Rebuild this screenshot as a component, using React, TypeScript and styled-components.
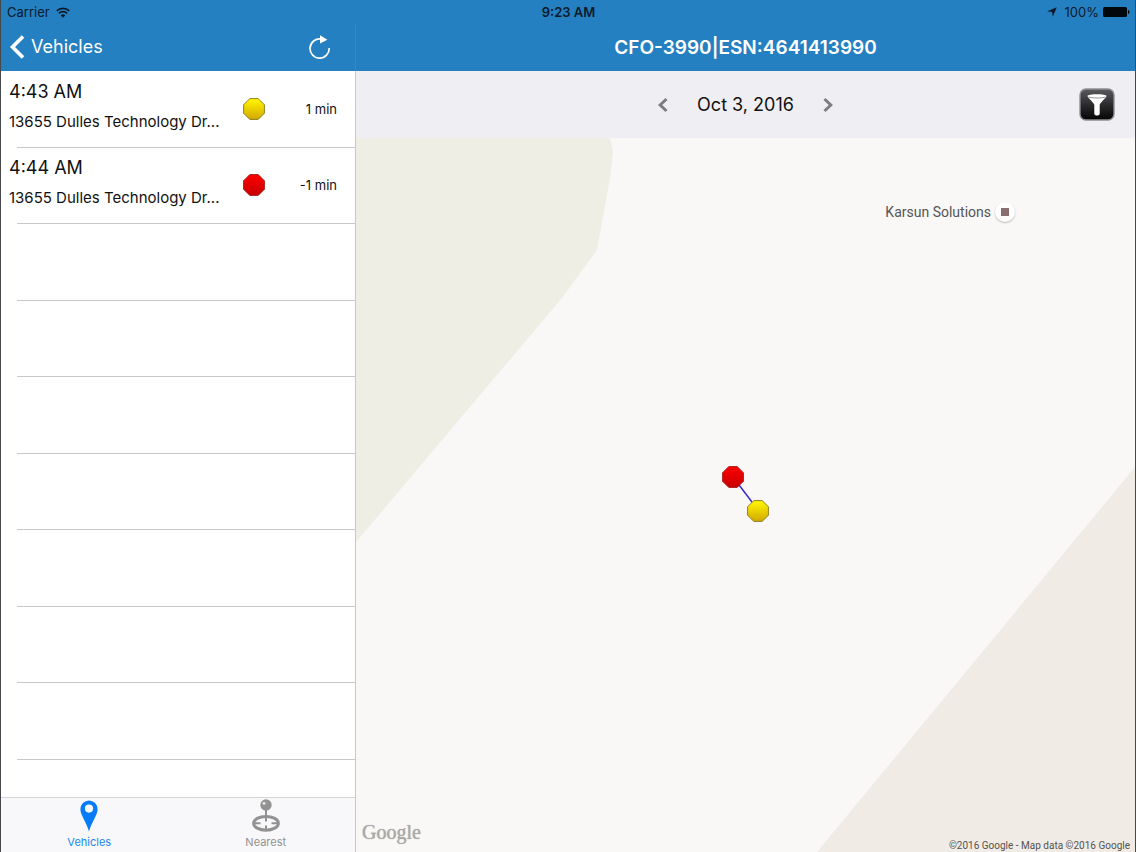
import React from 'react';
import styled, { createGlobalStyle } from 'styled-components';

const GlobalStyle = createGlobalStyle`
  * { box-sizing: border-box; }
  html, body, #root { height: 100%; margin: 0; }
  body { font-family: Inter, "Liberation Sans", sans-serif; color: #111; background: #fff; }
  button { font: inherit; color: inherit; background: none; border: 0; padding: 0; cursor: pointer; }
  svg { display: block; flex: none; }
  h1, h2, p { margin: 0; font-weight: 400; }
`;

const Screen = styled.div`
  display: flex;
  flex-direction: column;
  min-height: 100vh;
  border-left: 1px solid #45484c;
  border-right: 1px solid #45484c;
`;

const StatusBar = styled.header`
  display: grid;
  grid-template-columns: 1fr auto 1fr;
  align-items: center;
  height: 24px;
  padding: 0 5px 0 6px;
  background: #2580c2;
  color: #0a1a2b;
  font-size: 13px;
  line-height: 16px;
`;

const StatusGroup = styled.div<{ $end?: boolean }>`
  display: flex;
  align-items: center;
  justify-content: ${(p) => (p.$end ? 'flex-end' : 'flex-start')};
  gap: ${(p) => (p.$end ? 4 : 6)}px;
`;

const Clock = styled.time`
  font-weight: 600;
`;

const Split = styled.div`
  display: grid;
  grid-template-columns: 355px 1fr;
  flex: 1;
`;

const Sidebar = styled.aside`
  display: flex;
  flex-direction: column;
  border-right: 1px solid #c8c8cb;
`;

const NavBar = styled.div<{ $center?: boolean }>`
  display: flex;
  align-items: center;
  justify-content: ${(p) => (p.$center ? 'center' : 'space-between')};
  height: 47px;
  padding: ${(p) => (p.$center ? '0' : '0 24px 2px 8px')};
  background: #2580c2;
  color: #fff;
`;

const SideNav = styled(NavBar)`
  margin-right: -1px;
  border-right: 1px solid #3b86bf;
`;

const BackButton = styled.button`
  display: flex;
  align-items: center;
  gap: 6px;
  font-size: 18px;
  line-height: 24px;
`;

const Title = styled.h1`
  font-size: 19px;
  font-weight: 600;
  line-height: 24px;
`;

const StopList = styled.ul`
  flex: 1;
  margin: 0;
  padding: 0;
  list-style: none;
  background: #fff;
`;

const StopRow = styled.li`
  display: grid;
  grid-template-columns: 226px 40px 1fr;
  align-items: center;
  height: 77px;
  padding: 0 18px 2px 8px;
  background: linear-gradient(#c8c8ca, #c8c8ca) 16px 100% / 100% 1px no-repeat;
  &:nth-child(even) { height: 76px; }
`;

const StopText = styled.div`
  padding-bottom: 4px;
`;

const StopTime = styled.h2`
  font-size: 18px;
  line-height: 30px;
`;

const StopAddress = styled.p`
  font-size: 15px;
  line-height: 30px;
  white-space: nowrap;
`;

const Marker = styled.span`
  display: block;
  padding-left: 8px;
`;

const Duration = styled.span`
  font-size: 13px;
  line-height: 18px;
  text-align: right;
`;

const TabBar = styled.nav`
  display: grid;
  grid-template-columns: 1fr 1fr;
  height: 55px;
  padding-right: 1px;
  background: #f8f8fa;
  border-top: 1px solid #d5d5d5;
`;

const Tab = styled.button<{ $active?: boolean }>`
  display: flex;
  flex-direction: column;
  align-items: center;
  justify-content: flex-end;
  gap: 2px;
  padding-bottom: 2px;
  color: ${(p) => (p.$active ? '#2088ee' : '#929292')};
  font-size: 11px;
  line-height: 16px;
`;

const Main = styled.main`
  display: flex;
  flex-direction: column;
`;

const DateBar = styled.div`
  display: grid;
  grid-template-columns: 1fr auto 1fr;
  align-items: center;
  height: 67px;
  padding-right: 20px;
  background: #efeef3;
`;

const DatePicker = styled.div`
  grid-column: 2;
  display: flex;
  align-items: center;
  gap: 28px;
  padding-left: 20px;
  font-size: 18px;
  line-height: 24px;
`;

const FilterButton = styled.button`
  justify-self: end;
`;

const MapArea = styled.section`
  position: relative;
  flex: 1;
  background: #f9f8f6;
  font-family: Roboto, sans-serif;
`;

const MapShapes = styled.svg`
  position: absolute;
  inset: 0;
  width: 100%;
  height: 100%;
`;

const Place = styled.div`
  position: absolute;
  top: 64px;
  right: 120px;
  display: flex;
  align-items: center;
  gap: 4px;
  color: #555;
  font-size: 14px;
  line-height: 20px;
`;

const PlaceDot = styled.span`
  display: grid;
  place-items: center;
  width: 20px;
  height: 20px;
  border-radius: 50%;
  background: #fff;
  box-shadow: 0 1px 2px rgba(0, 0, 0, 0.25);
  &::after {
    content: '';
    width: 8px;
    height: 8px;
    background: #8b6f6f;
  }
`;

const MapLogo = styled.span`
  position: absolute;
  left: 6px;
  bottom: 6px;
  color: #aaa9a7;
  font-family: "Liberation Serif", serif;
  font-size: 20px;
  line-height: 28px;
  text-shadow: 0 0 1px #aaa9a7;
`;

const Attribution = styled.small`
  position: absolute;
  right: 5px;
  bottom: 0;
  color: #55534f;
  font-size: 10px;
  line-height: 12px;
`;

type Tone = 'yellow' | 'red';

const tones: Record<Tone, { top: string; bottom: string; edge: string }> = {
  yellow: { top: '#fff000', bottom: '#d0a800', edge: '#8f8128' },
  red: { top: '#f80000', bottom: '#c80000', edge: '#a82020' },
};

function Octagon({ tone, x, y }: { tone: Tone; x?: number; y?: number }) {
  const id = React.useId();
  const { top, bottom, edge } = tones[tone];
  return (
    <svg x={x} y={y} width="22" height="22" viewBox="0 0 22 22" aria-hidden="true">
      <defs>
        <linearGradient id={id} x1="0" y1="0" x2="0" y2="1">
          <stop offset="0.1" stopColor={top} />
          <stop offset="1" stopColor={bottom} />
        </linearGradient>
      </defs>
      <path d="M6.8.6h8.4l6.2 6.2v8.4l-6.2 6.2H6.8L.6 15.2V6.8z" fill={`url(#${id})`} stroke={edge} />
    </svg>
  );
}

function WifiIcon() {
  return (
    <svg width="14" height="11" viewBox="0 0 14 11" fill="none" stroke="#0a1a2b" strokeWidth="1.8" aria-hidden="true">
      <path d="M.8 3.8a9 9 0 0 1 12.4 0M3 6.3a5.8 5.8 0 0 1 8 0" />
      <path d="M7 10.8 4.8 8.4a3.2 3.2 0 0 1 4.4 0z" fill="#0a1a2b" stroke="none" />
    </svg>
  );
}

function ReloadIcon() {
  return (
    <svg width="22" height="24" viewBox="0 0 22 24" fill="none" aria-hidden="true">
      <path d="M20.2 13A9.6 9.6 0 1 1 12 4" stroke="#fff" strokeWidth="1.7" />
      <path d="M11 .3 18.4 4.7 11 8.6z" fill="#fff" />
    </svg>
  );
}

function DateArrow({ next }: { next?: boolean }) {
  return (
    <svg width="12" height="16" viewBox="0 0 12 16" fill="none" stroke="#7d7d80" strokeWidth="3" aria-hidden="true">
      <path d={next ? 'M2.5 2 8.8 8l-6.3 6' : 'M9.5 2 3.2 8l6.3 6'} />
    </svg>
  );
}

function FilterIcon() {
  return (
    <svg width="36" height="33" viewBox="0 0 36 33" aria-hidden="true">
      <defs>
        <linearGradient id="filter-face" x1="0" y1="0" x2="0" y2="1">
          <stop offset="0" stopColor="#5b5b5e" />
          <stop offset="0.5" stopColor="#2c2c2e" />
          <stop offset="1" stopColor="#050505" />
        </linearGradient>
      </defs>
      <rect x="1" y="1" width="34" height="31" rx="6" fill="url(#filter-face)" stroke="#8e8e92" strokeWidth="1.4" />
      <path d="M8.5 8c0-2.200 19-2.200 19 0 0 1.600-6.800 7-6.800 9v8.700c0 2.400-5.400 2.400-5.400 0v-8.700c0-2-6.800-7.400-6.800-9z" fill="#fff" />
      <path d="M9.600 9c3 1.300 13.800 1.300 16.800 0" fill="none" stroke="#77777a" strokeWidth="0.800" />
    </svg>
  );
}

function PinIcon() {
  return (
    <svg width="18" height="32" viewBox="0 0 18 32" aria-hidden="true">
      <path
        fillRule="evenodd"
        fill="#087cf8"
        d="M9 .5A8.6 8.6 0 0 0 .4 9.2C.4 15 6 21 9 31.5 12 21 17.6 15 17.6 9.2A8.600 8.600 0 0 0 9 .5zM9 4.500a4.100 4.100 0 1 1 0 8.200 4.100 4.100 0 0 1 0-8.200z"
      />
    </svg>
  );
}

function NearestIcon() {
  return (
    <svg width="28" height="33" viewBox="0 0 28 33" fill="none" aria-hidden="true">
      <ellipse cx="14" cy="24.300" rx="12.400" ry="6.900" stroke="#929292" strokeWidth="3" />
      <path d="M14 9v13.500M14 26.500v5M2 24.300h6.500M19.500 24.300H26" stroke="#929292" strokeWidth="2" />
      <circle cx="14" cy="6" r="5.700" fill="#929292" />
      <circle cx="12" cy="4.200" r="1.500" fill="#e4e4e4" />
    </svg>
  );
}

const stops: { time: string; address: string; tone: Tone; duration: string }[] = [
  { time: '4:43 AM', address: '13655 Dulles Technology Dr...', tone: 'yellow', duration: '1 min' },
  { time: '4:44 AM', address: '13655 Dulles Technology Dr...', tone: 'red', duration: '-1 min' },
];

const emptyRows = Array.from({ length: 7 }, (_, i) => i);

export default function App() {
  return (
    <>
      <GlobalStyle />
      <Screen>
        <StatusBar>
          <StatusGroup>
            <span>Carrier</span>
            <WifiIcon />
          </StatusGroup>
          <Clock>9:23 AM</Clock>
          <StatusGroup $end>
            <svg width="10" height="10" viewBox="0 0 10 10" aria-hidden="true">
              <path d="M9.800.2 5.800 9.800 5 5 .2 4.300z" fill="#0a1a2b" />
            </svg>
            <span>&nbsp;100%</span>
            <svg width="27" height="10" viewBox="0 0 27 10" aria-hidden="true">
              <rect width="24" height="10" rx="1.500" fill="#03080d" />
              <path d="M25 3c2 .4 2 3.600 0 4z" fill="#03080d" />
            </svg>
          </StatusGroup>
        </StatusBar>

        <Split>
          <Sidebar>
            <SideNav>
              <BackButton type="button">
                <svg width="16" height="24" viewBox="0 0 16 24" fill="none" stroke="#fff" strokeWidth="3.600" aria-hidden="true">
                  <path d="M14 1.500 3.500 12 14 22.500" />
                </svg>
                Vehicles
              </BackButton>
              <button type="button" aria-label="Reload">
                <ReloadIcon />
              </button>
            </SideNav>
            <StopList>
              {stops.map((stop) => (
                <StopRow key={stop.time}>
                  <StopText>
                    <StopTime>{stop.time}</StopTime>
                    <StopAddress>{stop.address}</StopAddress>
                  </StopText>
                  <Marker>
                    <Octagon tone={stop.tone} />
                  </Marker>
                  <Duration>{stop.duration}</Duration>
                </StopRow>
              ))}
              {emptyRows.map((row) => (
                <StopRow key={row} aria-hidden="true" />
              ))}
            </StopList>
            <TabBar>
              <Tab type="button" $active>
                <PinIcon />
                Vehicles
              </Tab>
              <Tab type="button">
                <NearestIcon />
                Nearest
              </Tab>
            </TabBar>
          </Sidebar>

          <Main>
            <NavBar $center>
              <Title>CFO-3990|ESN:4641413990</Title>
            </NavBar>
            <DateBar>
              <DatePicker>
                <button type="button" aria-label="Previous day">
                  <DateArrow />
                </button>
                <span>Oct 3, 2016</span>
                <button type="button" aria-label="Next day">
                  <DateArrow next />
                </button>
              </DatePicker>
              <FilterButton type="button" aria-label="Filter">
                <FilterIcon />
              </FilterButton>
            </DateBar>
            <MapArea aria-label="Map">
              <MapShapes viewBox="0 0 779 714" preserveAspectRatio="xMidYMid slice">
                <path d="M0 0h254l3 14-3 26-13 72-35 48L0 404z" fill="#eeeee5" />
                <path d="M779 329v385H461z" fill="#f0ece5" />
                <path d="M377 339 402 372" stroke="#2b22d0" strokeWidth="1.400" />
                <Octagon tone="red" x={366} y={328} />
                <Octagon tone="yellow" x={391} y={362} />
              </MapShapes>
              <Place>
                Karsun Solutions
                <PlaceDot />
              </Place>
              <MapLogo>Google</MapLogo>
              <Attribution>©2016 Google - Map data ©2016 Google</Attribution>
            </MapArea>
          </Main>
        </Split>
      </Screen>
    </>
  );
}
